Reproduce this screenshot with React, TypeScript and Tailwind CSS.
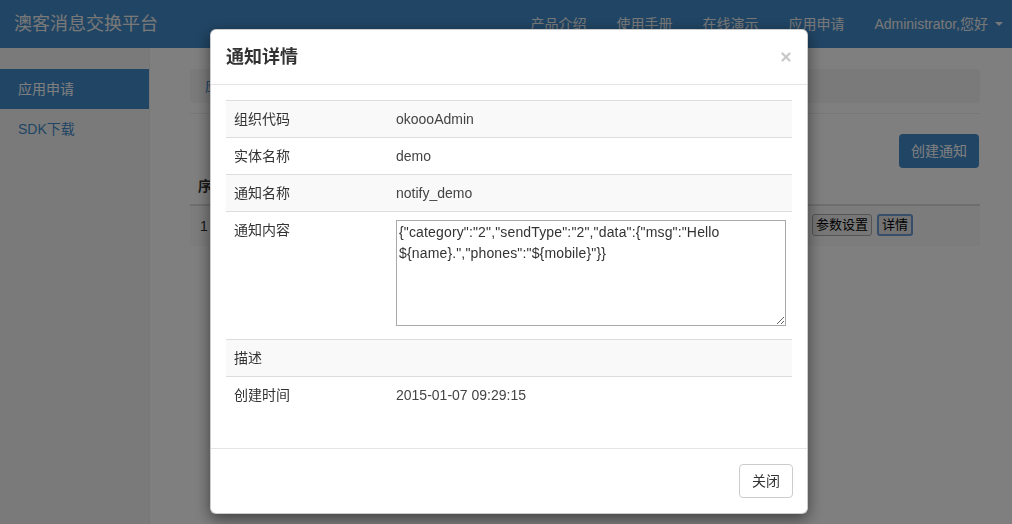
import { X } from "lucide-react";

const font = "font-['Liberation_Sans','Noto_Sans_CJK_SC',sans-serif]";

const rows = [
  { label: "组织代码", value: "okoooAdmin" },
  { label: "实体名称", value: "demo" },
  { label: "通知名称", value: "notify_demo" },
  { label: "通知内容", value: null },
  { label: "描述", value: "" },
  { label: "创建时间", value: "2015-01-07 09:29:15" },
];

const content =
  '{"category":"2","sendType":"2","data":{"msg":"Hello ${name}.","phones":"${mobile}"}}';

function Navbar() {
  return (
    <div className="flex h-12 items-center bg-[#428bca] text-[#f0f0f0]">
      <div className="pl-[14px] text-[18px]">澳客消息交换平台</div>
      <div className="ml-auto flex items-center gap-[30px] pr-[9px] text-[14px]">
        <span>产品介绍</span>
        <span>使用手册</span>
        <span>在线演示</span>
        <span>应用申请</span>
        <span className="flex items-center gap-[7px]">
          Administrator,您好
          <span className="h-0 w-0 border-x-[4px] border-t-[4px] border-x-transparent border-t-[#f0f0f0]" />
        </span>
      </div>
    </div>
  );
}

function Sidebar() {
  return (
    <div className="w-[150px] shrink-0 border-r border-[#eee] bg-[#f5f5f5] pt-[21px] text-[14px]">
      <div className="flex h-10 items-center bg-[#428bca] pl-[18px] text-white">应用申请</div>
      <div className="flex h-10 items-center pl-[18px] text-[#428bca]">SDK下载</div>
    </div>
  );
}

function Main() {
  return (
    <div className="flex-1 pl-[40px] pr-[32px] pt-[21px] text-[14px] text-[#333]">
      <div className="flex h-[34px] items-center rounded bg-[#f5f5f5] pl-[15px] text-[#428bca]">应用申请</div>
      <div className="mt-[10px] border-t border-[#eee]" />
      <div className="mt-[20px] flex justify-end pr-[1px]">
        <button className="h-[34px] rounded bg-[#428bca] px-[12px] text-white">创建通知</button>
      </div>
      <div className="border-b-2 border-[#ddd] px-[8px] pb-[7px] pt-[8px] font-bold">
        <span>序号</span>
      </div>
      <div className="flex h-10 items-center bg-[#f9f9f9] px-[10px]">
        <span>1</span>
        <div className="ml-auto flex items-center gap-[5px] pb-[2px] pr-[57px] text-[13px] text-black">
          <span className="rounded-[3px] border border-[#aaa] bg-[#eee] px-[3px] leading-[20px]">参数设置</span>
          <span className="rounded-[3px] border-2 border-[#6d9ad8] bg-[#e6e6e6] px-[3px] leading-[18px]">详情</span>
        </div>
      </div>
    </div>
  );
}

function Modal() {
  return (
    <div className="fixed inset-0 bg-black/50">
      <div className="ml-[210px] mt-[29px] w-[598px] rounded-[6px] border border-black/20 bg-white shadow-[0_5px_15px_rgba(0,0,0,0.5)]">
        <div className="flex h-[55px] items-center justify-between border-b border-[#e5e5e5] px-[15px]">
          <span className="text-[18px] font-bold text-[#333]">通知详情</span>
          <X className="mr-[-1px] h-[14px] w-[14px] text-[#c8c8c8]" strokeWidth={4} />
        </div>
        <div className="p-[15px]">
          <div className="mb-[20px] text-[14px] text-[#333]">
            {rows.map((r, i) => (
              <div
                key={r.label}
                className={`grid grid-cols-[162px_1fr] border-t border-[#ddd] ${i % 2 === 0 ? "bg-[#f9f9f9]" : "bg-white"}`}
              >
                <div className="px-[8px] py-[8px] leading-[20px]">{r.label}</div>
                {r.value === null ? (
                  <div className="pb-[13px] pl-[8px] pr-[8px] pt-[8px]">
                    <textarea
                      readOnly
                      defaultValue={content}
                      className="block h-[106px] w-[390px] resize border border-[#a9a9a9] px-[2px] py-[1px] text-[14px] leading-[21px] tracking-[0.15px] text-[#333] outline-none"
                    />
                  </div>
                ) : (
                  <div className="px-[8px] py-[8px] leading-[20px] text-[#444]">{r.value}</div>
                )}
              </div>
            ))}
          </div>
        </div>
        <div className="flex justify-end border-t border-[#e5e5e5] px-[14px] pb-[15px] pt-[15px]">
          <button className="h-[34px] rounded-[4px] border border-[#ccc] bg-white px-[12px] text-[14px] text-[#333]">
            关闭
          </button>
        </div>
      </div>
    </div>
  );
}

export default function App() {
  return (
    <div className={`${font} flex h-screen flex-col bg-white`}>
      <Navbar />
      <div className="flex flex-1">
        <Sidebar />
        <Main />
      </div>
      <Modal />
    </div>
  );
}
